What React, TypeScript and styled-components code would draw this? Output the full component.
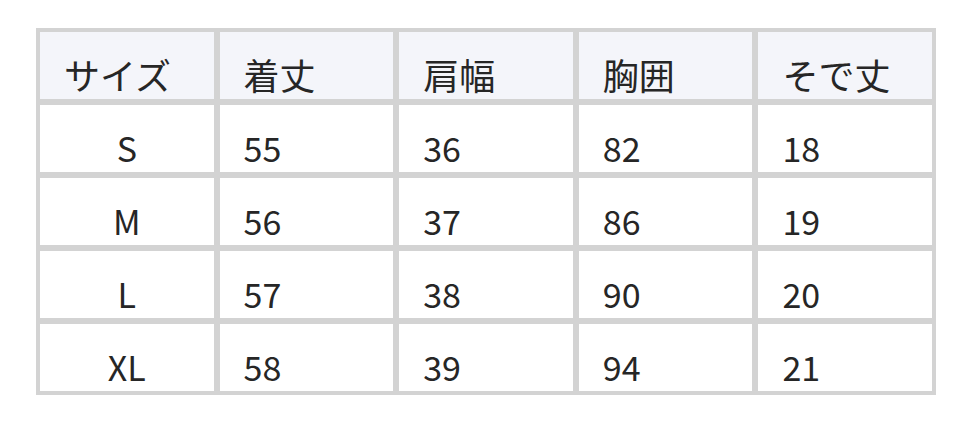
import React from "react";
import styled, { createGlobalStyle } from "styled-components";

const GlobalStyle = createGlobalStyle`
  html, body {
    margin: 0;
    padding: 0;
    background: #ffffff;
  }
  body {
    font-family: "Noto Sans CJK JP", "Noto Sans", sans-serif;
  }
`;

const Page = styled.div`
  padding: 28px 36px;
`;

const Table = styled.table`
  width: 900px;
  table-layout: fixed;
  border-collapse: separate;
  border-spacing: 0;
  border: 1px solid #d3d3d3;
  background: #d3d3d3;
  color: #262626;
  font-size: 34px;
`;

const Cell = styled.td<{ $head?: boolean; $center?: boolean }>`
  height: 41px;
  padding: 22px 24px 4px;
  line-height: 41px;
  border: 3px solid #d3d3d3;
  border-radius: 3px;
  background: ${(p) => (p.$head ? "#f4f5fa" : "#ffffff")};
  font-size: ${(p) => (p.$head ? "36px" : "34px")};
  text-align: ${(p) => (p.$center ? "center" : "left")};
  vertical-align: bottom;
  font-weight: 400;
  white-space: nowrap;
`;

const headers = ["サイズ", "着丈", "肩幅", "胸囲", "そで丈"];

const rows = [
  ["S", "55", "36", "82", "18"],
  ["M", "56", "37", "86", "19"],
  ["L", "57", "38", "90", "20"],
  ["XL", "58", "39", "94", "21"],
];

const App: React.FC = () => {
  return (
    <Page>
      <GlobalStyle />
      <Table>
        <thead>
          <tr>
            {headers.map((h) => (
              <Cell as="th" $head key={h}>
                {h}
              </Cell>
            ))}
          </tr>
        </thead>
        <tbody>
          {rows.map((r) => (
            <tr key={r[0]}>
              {r.map((v, i) => (
                <Cell $center={i === 0} key={i}>
                  {v}
                </Cell>
              ))}
            </tr>
          ))}
        </tbody>
      </Table>
    </Page>
  );
};

export default App;
